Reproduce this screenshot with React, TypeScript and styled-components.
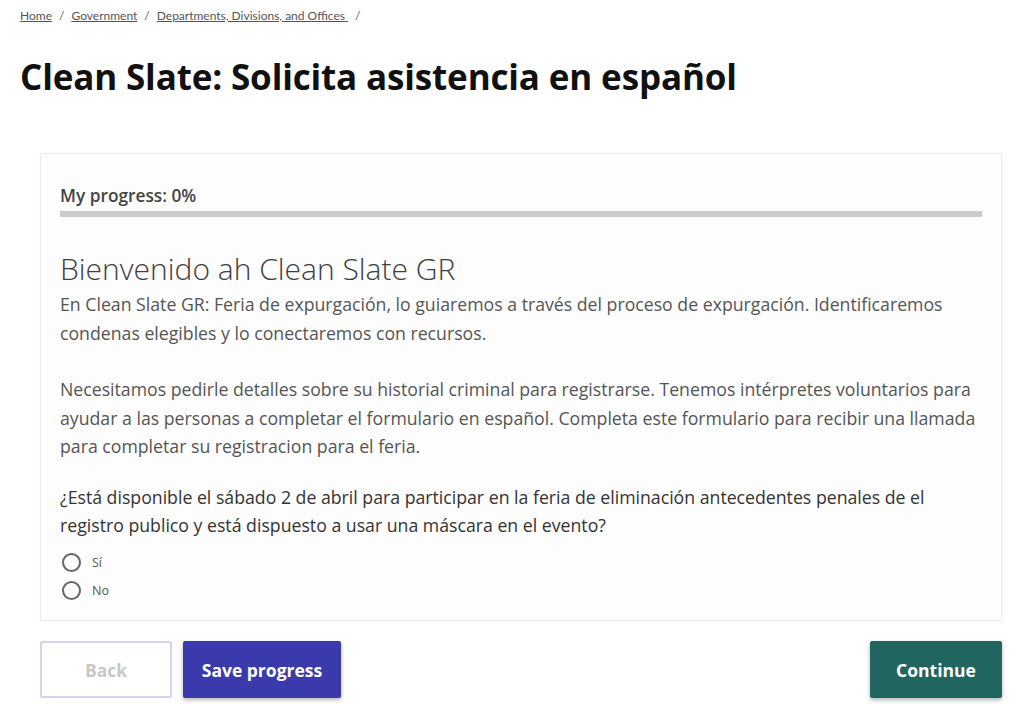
import React from "react";
import styled, { createGlobalStyle } from "styled-components";

const Global = createGlobalStyle`
  html, body { margin: 0; padding: 0; background: #fff; }
  body { font-family: "Open Sans", Lato, sans-serif; color: #333; }
  * { box-sizing: border-box; }
`;

const Page = styled.div`
  width: 1024px;
  height: 704px;
  overflow: hidden;
  padding: 0 22px 0 20px;
`;

const Crumbs = styled.nav`
  display: flex;
  gap: 7px;
  padding-top: 8px;
  font-family: Lato, sans-serif;
  font-size: 12px;
  color: #555;
  line-height: 16px;
`;

const Crumb = styled.a`
  color: #555;
  text-decoration: underline;
`;

const Sep = styled.span`
  color: #555;
`;

const Title = styled.h1`
  margin: 31px 0 0;
  font-size: 35px;
  font-weight: 700;
  color: #111;
  line-height: 44px;
  letter-spacing: -0.15px;
`;

const Body = styled.div`
  padding: 54px 0 0 20px;
`;

const Card = styled.section`
  background: #fdfdfd;
  border: 1px solid #ececec;
  box-shadow: 0 0 2px rgba(0, 0, 0, 0.06);
  padding: 30px 19px 12px 19px;
  height: 468px;
`;

const ProgressLabel = styled.div`
  font-size: 17.3px;
  font-weight: 600;
  color: #444;
  line-height: 24px;
`;

const Track = styled.div`
  height: 6px;
  background: #cbcbcb;
  margin-top: 3px;
`;

const Heading = styled.h2`
  margin: 30px 0 0;
  font-size: 30px;
  font-weight: 300;
  color: #3f3f3f;
  line-height: 43px;
`;

const Para = styled.p<{ $gap?: number; $dark?: boolean }>`
  margin: ${(p) => p.$gap ?? 0}px 0 0;
  font-size: 17.7px;
  line-height: 28.5px;
  color: ${(p) => (p.$dark ? "#333" : "#555")};
`;

const Options = styled.div`
  display: flex;
  flex-direction: column;
  gap: 9px;
  margin-top: 13px;
`;

const Option = styled.label`
  display: flex;
  align-items: center;
  gap: 11px;
  font-size: 12.5px;
  color: #555;
  padding-left: 2px;
`;

const Radio = styled.span`
  width: 19px;
  height: 19px;
  border-radius: 50%;
  border: 2px solid #666;
  display: inline-block;
`;

const Actions = styled.div`
  display: flex;
  align-items: center;
  gap: 11px;
  margin-top: 20px;
`;

const Button = styled.button<{ $variant: "back" | "save" | "continue" }>`
  height: 57px;
  font-family: inherit;
  font-size: 17.5px;
  font-weight: 700;
  border-radius: 2px;
  padding: 0 12px;
  cursor: pointer;
  ${(p) =>
    p.$variant === "back"
      ? `background:#fff;color:#c8c8c8;border:2px solid #d3d3f0;width:132px;`
      : p.$variant === "save"
      ? `background:#3a3aad;color:#fff;border:none;width:158px;box-shadow:0 2px 4px rgba(0,0,0,0.3);`
      : `background:#21655f;color:#fff;border:none;width:132px;margin-left:auto;box-shadow:0 2px 4px rgba(0,0,0,0.3);`}
`;

export default function App() {
  return (
    <Page>
      <Global />
      <Crumbs>
        <Crumb>Home</Crumb>
        <Sep>/</Sep>
        <Crumb>Government</Crumb>
        <Sep>/</Sep>
        <Crumb>Departments, Divisions, and Offices&nbsp;</Crumb>
        <Sep>/</Sep>
      </Crumbs>
      <Title>Clean Slate: Solicita asistencia en español</Title>
      <Body>
        <Card>
          <ProgressLabel>My progress: 0%</ProgressLabel>
          <Track />
          <Heading>Bienvenido ah Clean Slate GR</Heading>
          <Para>
            En Clean Slate GR: Feria de expurgación, lo guiaremos a través del proceso de expurgación. Identificaremos
            condenas elegibles y lo conectaremos con recursos.
          </Para>
          <Para $gap={28}>
            Necesitamos pedirle detalles sobre su historial criminal para registrarse. Tenemos intérpretes voluntarios para
            ayudar a las personas a completar el formulario en español. Completa este formulario para recibir una llamada
            para completar su registracion para el feria.
          </Para>
          <Para $gap={22} $dark>
            ¿Está disponible el sábado 2 de abril para participar en la feria de eliminación antecedentes penales de el
            registro publico y está dispuesto a usar una máscara en el evento?
          </Para>
          <Options>
            <Option>
              <Radio />
              Sí
            </Option>
            <Option>
              <Radio />
              No
            </Option>
          </Options>
        </Card>
        <Actions>
          <Button $variant="back">Back</Button>
          <Button $variant="save">Save progress</Button>
          <Button $variant="continue">Continue</Button>
        </Actions>
      </Body>
    </Page>
  );
}
